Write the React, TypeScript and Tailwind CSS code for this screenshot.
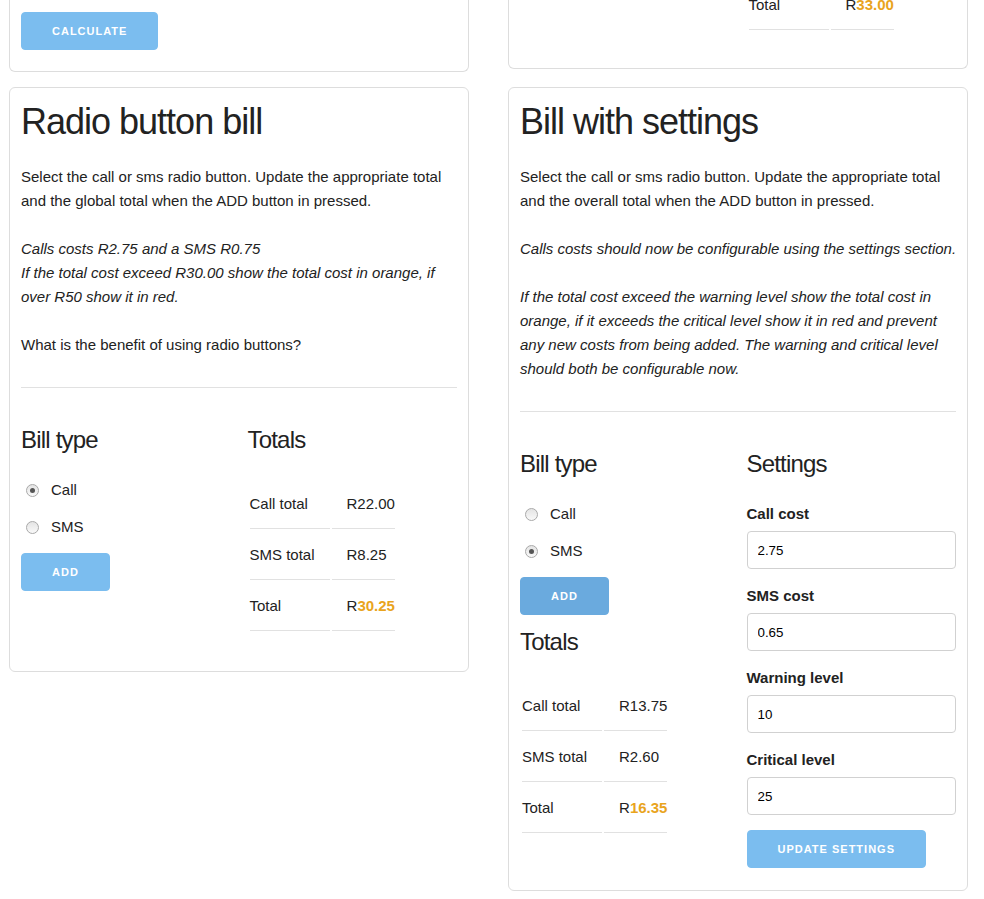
import React from "react";

const Btn = ({ label, dark }: { label: string; dark?: boolean }) => (
  <button
    className={
      "h-[38px] px-[30px] rounded-[4px] text-white text-[11px] font-semibold tracking-[1px] uppercase leading-[36px] mb-[10px] border " +
      (dark ? "bg-[#6aaade] border-[#6aaade]" : "bg-[#7bbdef] border-[#7bbdef]")
    }
  >
    {label}
  </button>
);

const Radio = ({ checked, label }: { checked?: boolean; label: string }) => (
  <div className="flex items-center h-[24px]">
    <span className="ml-[5px] w-[13px] h-[13px] rounded-full border border-[#a9a9a9] bg-gradient-to-b from-[#e4e4e4] to-[#f9f9f9] flex items-center justify-center">
      {checked ? <span className="w-[5px] h-[5px] rounded-full bg-[#555]" /> : null}
    </span>
    <span className="ml-[12px]">{label}</span>
  </div>
);

const Totals = ({
  call,
  sms,
  total,
}: {
  call: string;
  sms: string;
  total: string;
}) => (
  <table className="border-separate border-spacing-[2px] mt-[4px] mb-[27px]">
    <tbody>
      {[
        ["Call total", call, false],
        ["SMS total", sms, false],
        ["Total", total, true],
      ].map(([a, b, t]) => (
        <tr key={a as string}>
          <td className="pt-[12px] pb-[12px] pr-[15px] pl-0 border-b border-[#e1e1e1] text-left">
            {a}
          </td>
          <td className="pt-[12px] pb-[12px] pl-[15px] pr-0 border-b border-[#e1e1e1] text-left">
            {t ? (
              <>
                R<span className="font-bold text-[#e9a41d]">{b}</span>
              </>
            ) : (
              "R" + b
            )}
          </td>
        </tr>
      ))}
    </tbody>
  </table>
);

const H2 = ({ children }: { children: React.ReactNode }) => (
  <h2 className="text-[36px] leading-[45px] tracking-[-1px] mb-[21px]">{children}</h2>
);
const H4 = ({ children, extra }: { children: React.ReactNode; extra?: string }) => (
  <h4 className={"text-[24px] leading-[32px] tracking-[-0.8px] mb-[22px] " + (extra ?? "")}>{children}</h4>
);

const Field = ({ label, value }: { label: string; value: string }) => (
  <div>
    <div className="font-bold leading-[24px] mb-[5px]">{label}</div>
    <input
      defaultValue={value}
      className="w-full h-[38px] px-[10px] border border-[#d1d1d1] rounded-[4px] mb-[15px] text-[13.33px] text-black bg-white outline-none"
      style={{ fontFamily: "'Liberation Sans', Arial, sans-serif" }}
    />
  </div>
);

export default function App() {
  return (
    <div
      className="min-h-[899px] bg-white text-[#222] text-[15px] leading-[24px] overflow-hidden"
      style={{ fontFamily: "'Liberation Sans', Arial, Helvetica, sans-serif" }}
    >
      {/* Row 1 (scrolled, partially visible) */}
      <div className="flex items-start gap-[39px] pl-[9px]">
        <div className="w-[460px] border-x border-b border-[#dddddd] rounded-b-[6px] px-[11px] pt-[12px] pb-[11px]">
          <Btn label="Calculate" />
        </div>
        <div className="w-[460px] h-[69px] border-x border-b border-[#dddddd] rounded-b-[6px] px-[11px] pb-[11px] overflow-hidden">
          <div className="flex">
            <div className="w-[209px]" />
            <div className="w-[209px] ml-[17.5px]">
              <table className="border-separate border-spacing-[2px] -mt-[21px]">
                <tbody>
                  <tr>
                    <td className="py-[12px] pr-[15px] pl-0 border-b border-[#e1e1e1] w-[80px]">Total</td>
                    <td className="py-[12px] pl-[15px] pr-0 border-b border-[#e1e1e1]">
                      R<span className="font-bold text-[#e9a41d]">33.00</span>
                    </td>
                  </tr>
                </tbody>
              </table>
            </div>
          </div>
        </div>
      </div>

      {/* Row 2 */}
      <div className="flex items-start gap-[39px] pl-[9px] mt-[15px]">
        {/* Radio button bill */}
        <div className="w-[460px] border border-[#dddddd] rounded-[6px] px-[11px] pt-[11px] pb-[11px]">
          <H2>Radio button bill</H2>
          <p className="mb-[24px]">
            Select the call or sms radio button. Update the appropriate total and the global total when the ADD button in pressed.
          </p>
          <p className="italic mb-[24px]">
            Calls costs R2.75 and a SMS R0.75
            <br />
            If the total cost exceed R30.00 show the total cost in orange, if over R50 show it in red.
          </p>
          <p>What is the benefit of using radio buttons?</p>
          <div className="h-px bg-[#e1e1e1] mt-[30px] mb-[36px]" />
          <div className="flex">
            <div className="w-[209px]">
              <H4>Bill type</H4>
              <div className="flex flex-col gap-[13px]">
                <Radio checked label="Call" />
                <Radio label="SMS" />
              </div>
              <div className="mt-[14px]">
                <Btn label="Add" />
              </div>
            </div>
            <div className="w-[209px] ml-[17.5px]">
              <H4>Totals</H4>
              <Totals call="22.00" sms="8.25" total="30.25" />
            </div>
          </div>
        </div>

        {/* Bill with settings */}
        <div className="w-[460px] border border-[#dddddd] rounded-[6px] px-[11px] pt-[11px] pb-[12px]">
          <H2>Bill with settings</H2>
          <p className="mb-[24px]">
            Select the call or sms radio button. Update the appropriate total and the overall total when the ADD button in pressed.
          </p>
          <p className="italic mb-[24px] whitespace-nowrap">
            Calls costs should now be configurable using the settings section.
          </p>
          <p className="italic">
            If the total cost exceed the warning level show the total cost in orange, if it exceeds the critical level show it in red and prevent any new costs from being added. The warning and critical level should both be configurable now.
          </p>
          <div className="h-px bg-[#e1e1e1] mt-[30px] mb-[36px]" />
          <div className="flex">
            <div className="w-[209px]">
              <H4>Bill type</H4>
              <div className="flex flex-col gap-[13px]">
                <Radio label="Call" />
                <Radio checked label="SMS" />
              </div>
              <div className="mt-[14px]">
                <Btn label="Add" dark />
              </div>
              <H4 extra="mt-[1px]">Totals</H4>
              <Totals call="13.75" sms="2.60" total="16.35" />
            </div>
            <div className="w-[209px] ml-[17.5px]">
              <H4>Settings</H4>
              <div>
                <Field label="Call cost" value="2.75" />
                <Field label="SMS cost" value="0.65" />
                <Field label="Warning level" value="10" />
                <Field label="Critical level" value="25" />
              </div>
              <Btn label="Update settings" />
            </div>
          </div>
        </div>
      </div>
    </div>
  );
}
